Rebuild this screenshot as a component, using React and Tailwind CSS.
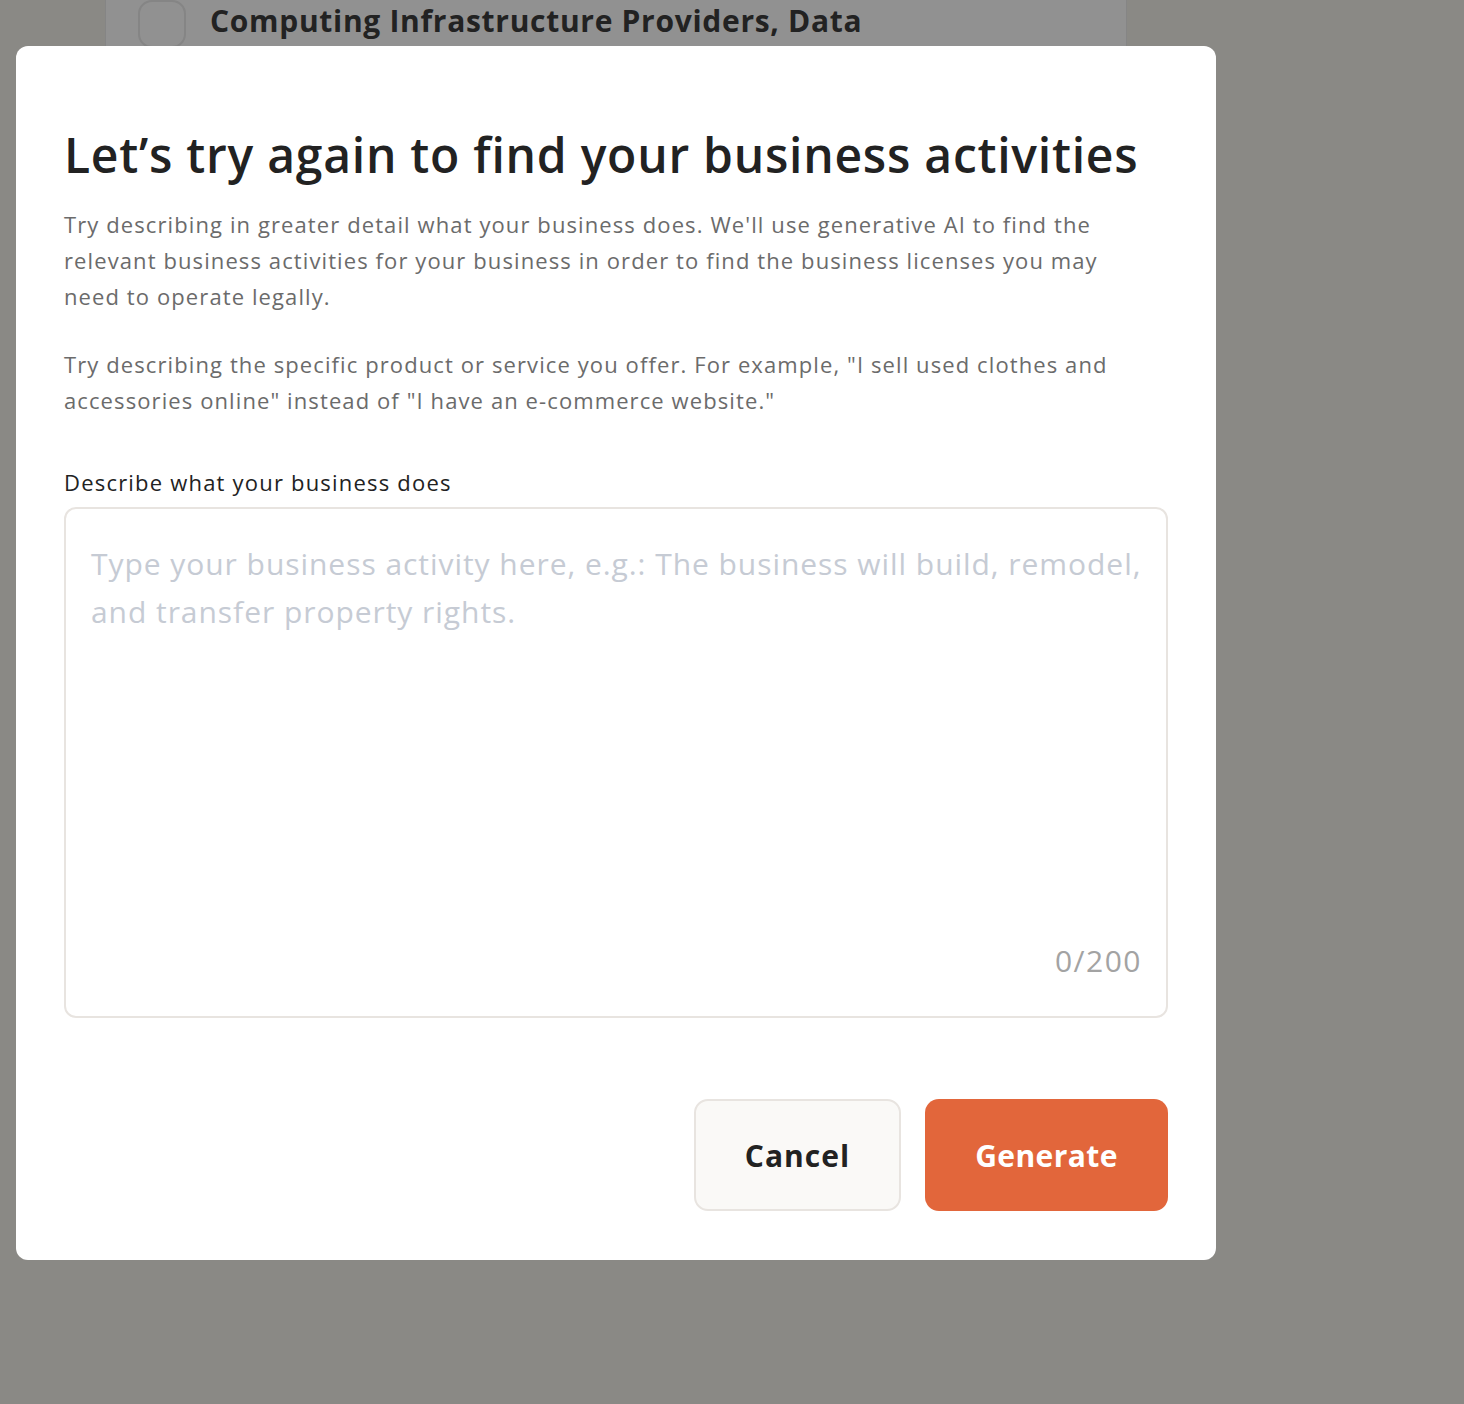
const BackgroundPage = () => (
  <div className="min-h-[1404px] w-full bg-[#8a8985]">
    <div className="ml-[105px] w-[1022px] h-[46px] bg-[#919191] border-x border-[#858585] flex items-end">
      <div className="flex items-center gap-[24px] pl-[32px] -mb-[2px]">
        <div className="w-[48px] h-[48px] rounded-[14px] border-2 border-[#858585] -mt-[10px]" />
        <span className="text-[30px] font-bold text-[#222] tracking-[0.7px] [font-family:'Open_Sans',sans-serif] -mt-[18px]">
          Computing Infrastructure Providers, Data
        </span>
      </div>
    </div>
  </div>
);

const Modal = () => (
  <div className="absolute left-[16px] top-[46px] w-[1200px] bg-white rounded-[12px] px-[48px] pt-[80px] pb-[49px] [font-family:'Open_Sans',sans-serif]">
    <h1 className="text-[48px] leading-[58px] font-semibold text-[#222] tracking-[0.75px]">
      Let’s try again to find your business activities
    </h1>
    <p className="mt-[22px] text-[22px] leading-[36px] text-[#6b6b6b] tracking-[1.1px]">
      Try describing in greater detail what your business does. We'll use generative AI to find the
      <br />
      relevant business activities for your business in order to find the business licenses you may
      <br />
      need to operate legally.
    </p>
    <p className="mt-[32px] text-[22px] leading-[36px] text-[#6b6b6b] tracking-[1.1px]">
      Try describing the specific product or service you offer. For example, "I sell used clothes and
      <br />
      accessories online" instead of "I have an e-commerce website."
    </p>
    <label className="block mt-[50px] text-[22px] leading-[28px] text-[#222] tracking-[1.2px]">
      Describe what your business does
    </label>
    <div className="relative mt-[11px] h-[511px] border-2 border-[#e8e4e0] rounded-[12px]">
      <textarea
        className="w-full h-full resize-none outline-none bg-transparent pl-[25px] pr-[8px] pt-[31px] text-[30px] leading-[48px] tracking-[0.95px] text-[#222] placeholder:text-[#c6cbd4]"
        placeholder="Type your business activity here, e.g.: The business will build, remodel, and transfer property rights."
      />
      <span className="absolute right-[24px] bottom-[38px] text-[30px] leading-[34px] tracking-[1.5px] text-[#a3a3a3]">
        0/200
      </span>
    </div>
    <div className="mt-[81px] flex justify-end gap-[24px]">
      <button className="w-[207px] h-[112px] rounded-[14px] border-2 border-[#e8e4e0] bg-[#faf9f7] text-[30px] font-bold tracking-[1px] text-[#222]">
        Cancel
      </button>
      <button className="w-[243px] h-[112px] rounded-[14px] bg-[#e2663b] text-[30px] font-bold tracking-[0.4px] text-white">
        Generate
      </button>
    </div>
  </div>
);

export default function App() {
  return (
    <div className="relative w-full overflow-hidden">
      <BackgroundPage />
      <Modal />
    </div>
  );
}
